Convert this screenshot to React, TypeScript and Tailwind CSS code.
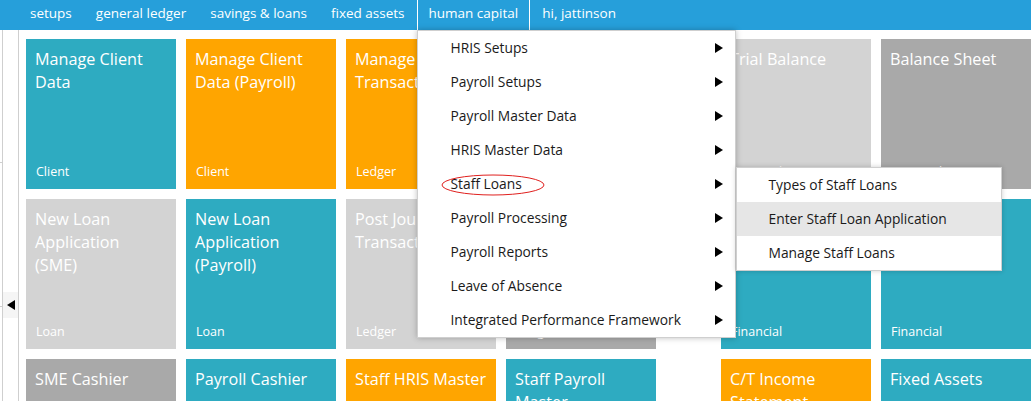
import React from "react";

type Tile = { title: string; sub?: string; color: string };

const TEAL = "bg-[#2eabc1]";
const ORANGE = "bg-[#ffa500]";
const LIGHT = "bg-[#d3d3d3]";
const DARK = "bg-[#a9a9a9]";

const groupA: Tile[] = [
  { title: "Manage Client Data", sub: "Client", color: TEAL },
  { title: "Manage Client Data (Payroll)", sub: "Client", color: ORANGE },
  { title: "Manage Transactions", sub: "Ledger", color: ORANGE },
  { title: "Manage Payroll", sub: "Payroll", color: TEAL },
  { title: "New Loan Application\n(SME)", sub: "Loan", color: LIGHT },
  { title: "New Loan Application (Payroll)", sub: "Loan", color: TEAL },
  { title: "Post Journal Transactions", sub: "Ledger", color: LIGHT },
  { title: "Cash Book", sub: "Ledger", color: DARK },
  { title: "SME Cashier", color: DARK },
  { title: "Payroll Cashier", color: TEAL },
  { title: "Staff HRIS Master", color: ORANGE },
  { title: "Staff Payroll Master", color: TEAL },
];

const groupB: Tile[] = [
  { title: "Trial Balance", sub: "Financial", color: LIGHT },
  { title: "Balance Sheet", sub: "Financial", color: DARK },
  { title: "Income Statement", sub: "Financial", color: TEAL },
  { title: "Cash Flow", sub: "Financial", color: TEAL },
  { title: "C/T Income Statement", color: ORANGE },
  { title: "Fixed Assets", color: TEAL },
];

const menuItems = [
  "HRIS Setups",
  "Payroll Setups",
  "Payroll Master Data",
  "HRIS Master Data",
  "Staff Loans",
  "Payroll Processing",
  "Payroll Reports",
  "Leave of Absence",
  "Integrated Performance Framework",
];

const subItems = ["Types of Staff Loans", "Enter Staff Loan Application", "Manage Staff Loans"];

function TileBox({ t }: { t: Tile }) {
  return (
    <div className={`${t.color} relative h-[150px] w-[150px] text-white`}>
      <div className="whitespace-pre-line pl-[9px] pr-[2px] pt-[9px] text-[16.2px] leading-[23px]">{t.title}</div>
      {t.sub && (
        <div className="absolute bottom-[9px] left-[10px] text-[12.5px] leading-[16px]">{t.sub}</div>
      )}
    </div>
  );
}

function Arrow() {
  return (
    <svg width="8" height="10" viewBox="0 0 8 10" className="block">
      <polygon points="0,0 8,5 0,10" fill="#000" />
    </svg>
  );
}

export default function App() {
  const nav = ["setups", "general ledger", "savings & loans", "fixed assets", "human capital", "hi, jattinson"];
  return (
    <div
      className="relative h-[401px] w-[1031px] overflow-hidden bg-white"
      style={{ fontFamily: '"Open Sans", "Noto Sans", sans-serif' }}
    >
      {/* top nav */}
      <div className="relative z-20 flex h-[30px] bg-[#269fda] pl-[18px] text-[13.5px] text-white">
        {nav.map((n) => (
          <div
            key={n}
            className={`relative flex h-[30px] items-center px-[11px] pb-[4px] ${
              n === "human capital" ? "border-x border-white" : "border-x border-transparent"
            }`}
          >
            {n}
            {n === "human capital" && (
              <div className="absolute left-[-1px] top-[30px] w-[319px] border border-[#cfcfcf] bg-white text-[13.8px] text-[#1a1a1a] shadow-[0_0_6px_rgba(0,0,0,0.25)]">
                {menuItems.map((m) => (
                  <div key={m} className="relative flex h-[34px] items-center justify-between pl-[33px] pr-[12px]">
                    <span className="relative">
                      {m}
                      {m === "Staff Loans" && (
                        <svg
                          className="absolute left-[-10px] top-0"
                          width="104"
                          height="22"
                          viewBox="0 0 104 22"
                        >
                          <ellipse cx="52" cy="11" rx="51" ry="10" fill="none" stroke="#e0201e" strokeWidth="1" />
                        </svg>
                      )}
                    </span>
                    <Arrow />
                    {m === "Staff Loans" && (
                      <div className="absolute left-[318px] top-0 w-[266px] border border-[#cfcfcf] bg-white shadow-[0_0_5px_rgba(0,0,0,0.2)]">
                        {subItems.map((s, i) => (
                          <div
                            key={s}
                            className={`flex h-[34px] items-center pl-[32px] ${i === 1 ? "bg-[#e6e6e6]" : ""}`}
                          >
                            {s}
                          </div>
                        ))}
                      </div>
                    )}
                  </div>
                ))}
              </div>
            )}
          </div>
        ))}
      </div>

      {/* body */}
      <div className="flex h-[371px]">
        {/* collapsed sidebar */}
        <div className="relative flex w-[18px] shrink-0">
          <div className="flex w-[3px] flex-col border-r border-[#cfcfcf]">
            <div className="h-[133px] border-b border-[#cfcfcf]" />
            <div className="h-[144px] border-b border-[#cfcfcf]" />
          </div>
          <div className="flex flex-1 flex-col">
            <div className="h-[262px]" />
            <div className="flex h-[26px] items-center justify-center bg-[#f5f5f5]">
              <svg width="8" height="10" viewBox="0 0 8 10">
                <polygon points="8,0 0,5 8,10" fill="#000" />
              </svg>
            </div>
          </div>
        </div>
        {/* content */}
        <div className="flex flex-1 gap-[65px] border-l border-[#cfcfcf] pl-[7px] pt-[9px]">
          <div className="grid shrink-0 grid-cols-4 gap-[10px] self-start">
            {groupA.map((t) => (
              <TileBox key={t.title} t={t} />
            ))}
          </div>
          <div className="grid shrink-0 grid-cols-2 gap-[10px] self-start">
            {groupB.map((t) => (
              <TileBox key={t.title} t={t} />
            ))}
          </div>
        </div>
      </div>
    </div>
  );
}
